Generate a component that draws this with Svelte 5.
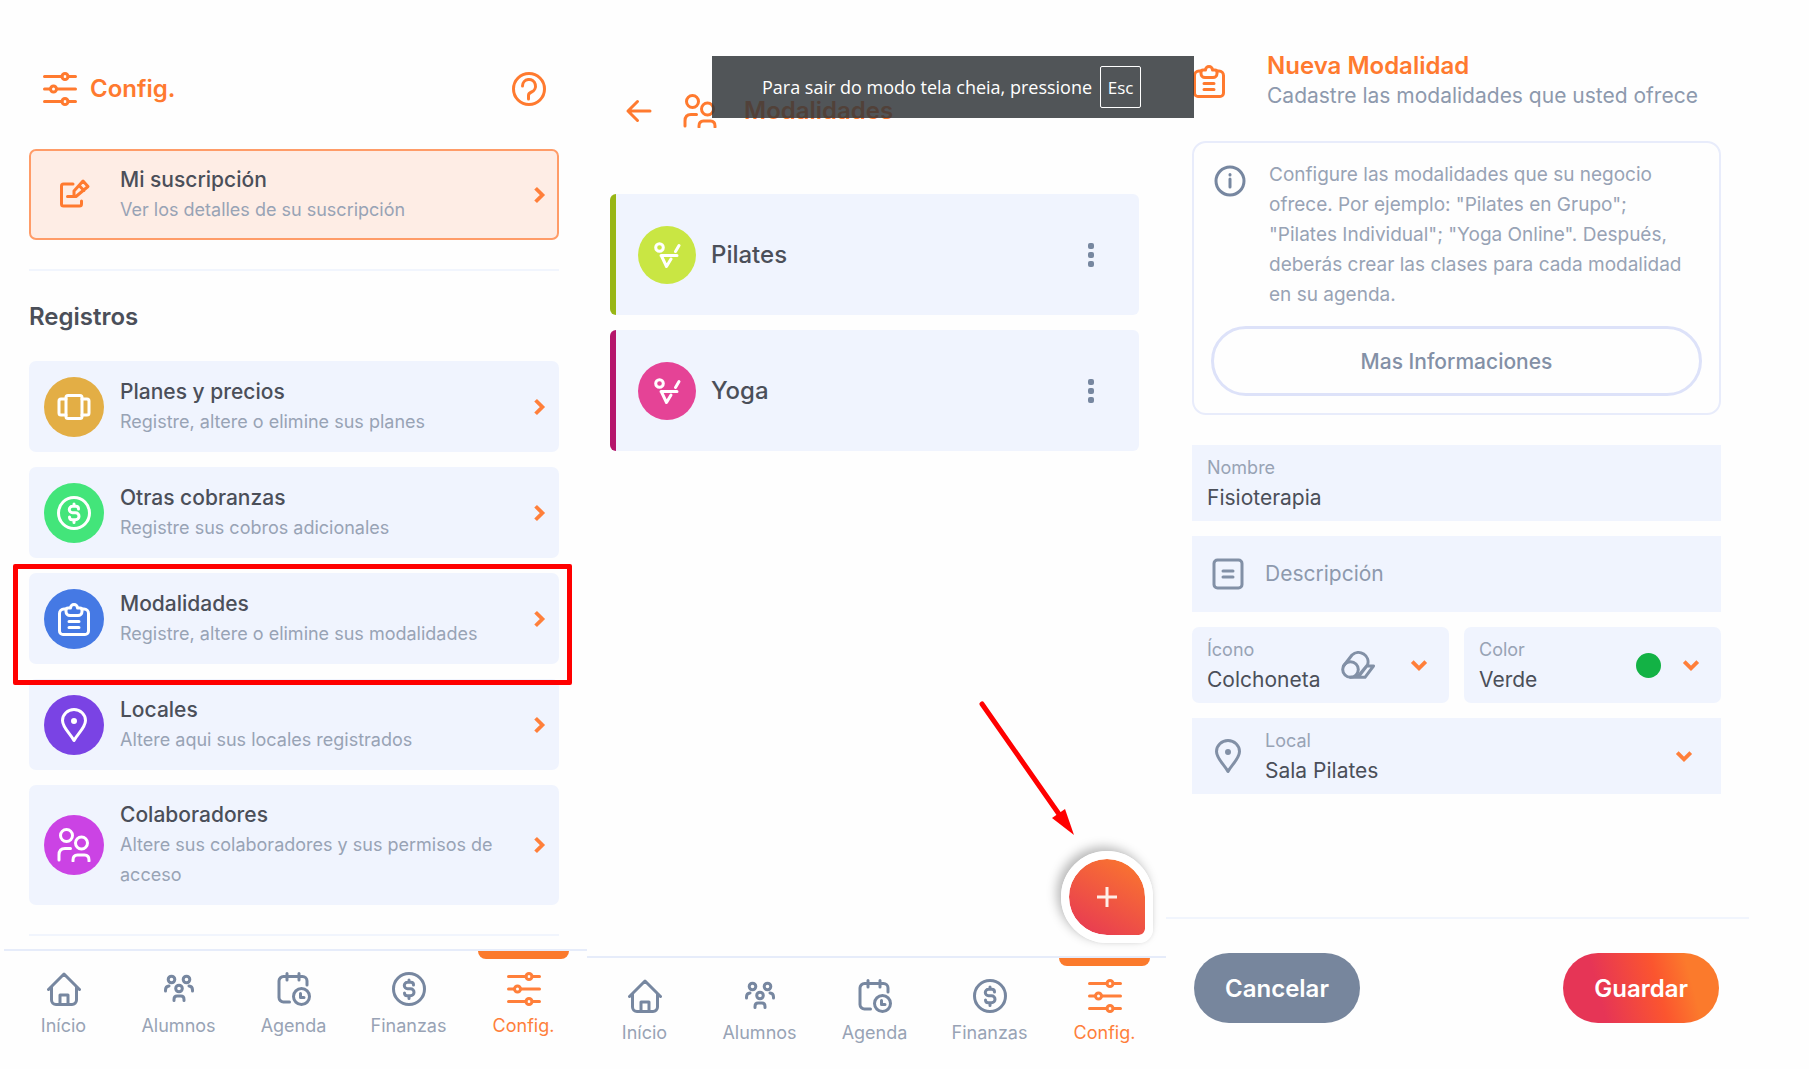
<script>
	const records = [
		{ icon: 'plans', color: '#e3ae45', title: 'Planes y precios', text: 'Registre, altere o elimine sus planes' },
		{ icon: 'money', color: '#43e57a', title: 'Otras cobranzas', text: 'Registre sus cobros adicionales' },
		{
			icon: 'clipboard',
			color: '#4579e4',
			title: 'Modalidades',
			text: 'Registre, altere o elimine sus modalidades',
			marked: true
		},
		{ icon: 'pin', color: '#7a43e4', title: 'Locales', text: 'Altere aqui sus locales registrados' },
		{
			icon: 'users',
			color: '#cb43e4',
			title: 'Colaboradores',
			text: 'Altere sus colaboradores y sus permisos de acceso'
		}
	];

	const classes = [
		{ name: 'Pilates', color: '#c9e643', edge: '#98b615' },
		{ name: 'Yoga', color: '#e54396', edge: '#b5156b' }
	];

	const tabs = [
		{ icon: 'home', label: 'Início' },
		{ icon: 'students', label: 'Alumnos' },
		{ icon: 'agenda', label: 'Agenda' },
		{ icon: 'money', label: 'Finanzas' },
		{ icon: 'sliders', label: 'Config.', active: true }
	];

	let name = $state('Fisioterapia');
	let description = $state('');
	let iconName = $state('Colchoneta');
	let color = $state('Verde');
	let place = $state('Sala Pilates');
</script>

{#snippet icon(kind)}
	<svg class="icon" viewBox="0 0 34 34" aria-hidden="true">
		{#if kind === 'sliders'}
			<path d="M1.500 4.500h17.500M25 4.500h7.500M1.500 17h6M13.500 17h19M1.500 29.500h17.500M25 29.500h7.500" />
			<circle cx="22" cy="4.500" r="3" />
			<circle cx="10.500" cy="17" r="3" />
			<circle cx="22" cy="29.500" r="3" />
		{:else if kind === 'help'}
			<circle cx="17" cy="17" r="15.500" />
			<path d="M10.500 14a6.500 6.500 0 1 1 9 6c-2 .8-3 1.500-3 3.500v3.500" />
		{:else if kind === 'edit'}
			<path d="M16 6H6.500a2 2 0 0 0-2 2v18a2 2 0 0 0 2 2h16a2 2 0 0 0 2-2v-3" />
			<path d="M10.500 18.500H19L31 8.500l-5-5.500-9 10v5.500M22 7.500l5 5" />
		{:else if kind === 'plans'}
			<rect x="9" y="5.500" width="16" height="23" rx="2" />
			<path d="M9 9H4a2 2 0 0 0-2 2v12a2 2 0 0 0 2 2h5M25 9h5a2 2 0 0 1 2 2v12a2 2 0 0 1-2 2h-5" />
		{:else if kind === 'money'}
			<circle cx="17" cy="17" r="15.500" />
			<path d="M21.500 13c0-1.700-1.200-2.700-2.700-2.700h-3.300a3.200 3.200 0 0 0 0 6.400h3a3.500 3.500 0 0 1 0 7h-3.200c-1.700 0-2.800-1-2.800-2.700M17 8v2M17 24v2.500" />
		{:else if kind === 'clipboard'}
			<path d="M9 7H7a4.500 4.500 0 0 0-4.500 4.500V29A3.500 3.500 0 0 0 6 32.500h22a3.500 3.500 0 0 0 3.500-3.500V11.500A4.500 4.500 0 0 0 27 7h-2" />
			<path d="M9 8v1.500a4 4 0 0 0 4 4h8a4 4 0 0 0 4-4V8a2 2 0 0 0-2-2h-2.500a3.500 3.500 0 0 0-7 0H11a2 2 0 0 0-2 2zM12 19.500h10M12 25.500h10" />
		{:else if kind === 'pin'}
			<path d="M17 32.500C13.500 26 5.500 19.500 5.500 12.500a11.500 11 0 0 1 23 0c0 7-8 13.500-11.500 20z" />
			<circle class="solid" cx="17" cy="13" r="1.500" />
		{:else if kind === 'users'}
			<circle cx="9.500" cy="7.500" r="6" />
			<circle cx="24.500" cy="15" r="6" />
			<path d="M2 32v-5c0-4 2-6.500 6-6.500h5.500M16 33v-1c0-3.500 2-5 4.500-5h7c2.500 0 4.500 1.500 4.500 5v1" />
		{:else if kind === 'home'}
			<path d="M1.500 17.500L17 2l15.500 15.500M4.500 15v13a4.500 4.500 0 0 0 4.500 4.500h16a4.500 4.500 0 0 0 4.500-4.500V15M13 32v-9h8v9" />
		{:else if kind === 'students'}
			<circle cx="9.500" cy="7.500" r="3.300" />
			<circle cx="24.500" cy="7.500" r="3.300" />
			<circle cx="17" cy="16.500" r="3.300" />
			<path d="M3.500 19v-1c0-2.500 1.500-3.800 3.500-4M30.500 19v-1c0-2.500-1.500-3.800-3.500-4M12 28.500v-1c0-2 1-3.500 3-3.500h4c2 0 3 1.500 3 3.500v1" />
		{:else if kind === 'agenda'}
			<path d="M12.500 30H6.500A4.500 4.500 0 0 1 2 25.500V9a4.500 4.500 0 0 1 4.500-4.500h19A4.500 4.500 0 0 1 30 9v4M10 1.500V8M22 1.500V8" />
			<circle cx="24.500" cy="24.500" r="8" />
			<path d="M23.500 21.500v4h3.500" />
		{:else if kind === 'info'}
			<circle cx="17" cy="17" r="14" />
			<path d="M17 15v8M17 10.500v.5" />
		{:else if kind === 'doc'}
			<rect x="3" y="3" width="28" height="28" rx="3.500" />
			<path d="M12 14h10M12 20h10" />
		{:else if kind === 'mat'}
			<circle cx="9.500" cy="21.500" r="7.800" />
			<path d="M2.500 18L11 7a9.500 9.500 0 0 1 15.500 10L18 28M9.500 29.300H24L32.500 18h-6M16.500 29l9.500-11.500" />
		{:else if kind === 'pose'}
			<circle cx="9.500" cy="9.500" r="3.800" />
			<path d="M25.500 13.500l3.500-6M11 17.500h16M11.500 18l5 10.500 4.500-7.500" />
		{:else if kind === 'back'}
			<path d="M28 17H6M15.500 7.500L6 17l9.500 9.500" />
		{/if}
	</svg>
{/snippet}

{#snippet chevron(direction)}
	<svg class="chevron {direction}" viewBox="0 0 16 16" aria-hidden="true">
		<path d="M5 2l6 6-6 6" />
	</svg>
{/snippet}

{#snippet tabbar()}
	<nav class="tabbar">
		{#each tabs as tab}
			<a href="#{tab.icon}" class:active={tab.active}>
				{@render icon(tab.icon)}
				<span>{tab.label}</span>
			</a>
		{/each}
	</nav>
{/snippet}

<main class="screens">
	<section class="screen config">
		<div class="content">
			<header>
				{@render icon('sliders')}
				<h1>Config.</h1>
				<button aria-label="Ayuda">{@render icon('help')}</button>
			</header>

			<a class="row subscription" href="#suscripcion">
				<span class="badge">{@render icon('edit')}</span>
				<span class="text">
					<strong>Mi suscripción</strong>
					<small>Ver los detalles de su suscripción</small>
				</span>
				{@render chevron('right')}
			</a>

			<hr />
			<h2>Registros</h2>

			<div class="list">
				{#each records as record}
					<a class="row" class:marked={record.marked} href="#{record.icon}">
						<span class="badge" style="background: {record.color}">{@render icon(record.icon)}</span>
						<span class="text">
							<strong>{record.title}</strong>
							<small>{record.text}</small>
						</span>
						{@render chevron('right')}
					</a>
				{/each}
			</div>
			<hr />
		</div>
		{@render tabbar()}
	</section>

	<section class="screen classes">
		<div class="content">
			<header>
				<button aria-label="Volver">{@render icon('back')}</button>
				{@render icon('users')}
				<h1>Modalidades</h1>
			</header>

			<div class="list">
				{#each classes as item}
					<article style="border-color: {item.edge}">
						<span class="badge" style="background: {item.color}">{@render icon('pose')}</span>
						<h2>{item.name}</h2>
						<button class="dots" aria-label="Opciones de {item.name}">
							<i></i><i></i><i></i>
						</button>
					</article>
				{/each}
			</div>
		</div>

		<div class="add">
			<svg class="arrow" viewBox="0 0 100 140" aria-hidden="true">
				<path class="line" d="M3 4L82 117" />
				<path class="head" d="M73 118L86 109L95 135z" />
			</svg>
			<button aria-label="Agregar modalidad">
				<svg viewBox="0 0 24 24"><path d="M12 2v20M2 12h20" /></svg>
			</button>
		</div>
		{@render tabbar()}

		<div class="fullscreen-hint">
			<span>Para sair do modo tela cheia, pressione</span>
			<kbd>Esc</kbd>
		</div>
	</section>

	<section class="screen create">
		<form class="content" onsubmit={(e) => e.preventDefault()}>
			<header>
				{@render icon('clipboard')}
				<div>
					<h1>Nueva Modalidad</h1>
					<p>Cadastre las modalidades que usted ofrece</p>
				</div>
			</header>

			<div class="info">
				<div class="info-text">
					{@render icon('info')}
					<p>
						Configure las modalidades que su negocio ofrece. Por ejemplo: "Pilates en Grupo"; "Pilates
						Individual"; "Yoga Online". Después, deberás crear las clases para cada modalidad en su
						agenda.
					</p>
				</div>
				<button type="button">Mas Informaciones</button>
			</div>

			<div class="fields">
				<div class="field">
					<div class="control">
						<label for="name">Nombre</label>
						<input id="name" type="text" bind:value={name} />
					</div>
				</div>
				<div class="field with-icon">
					{@render icon('doc')}
					<div class="control">
						<input type="text" aria-label="Descripción" placeholder="Descripción" bind:value={description} />
					</div>
				</div>
				<div class="pair">
					<div class="field rounded">
						<div class="control">
							<label for="icon">Ícono</label>
							<select id="icon" bind:value={iconName}>
								<option>Colchoneta</option>
							</select>
						</div>
						<div class="mat">{@render icon('mat')}</div>
						{@render chevron('down')}
					</div>
					<div class="field rounded">
						<div class="control">
							<label for="color">Color</label>
							<select id="color" bind:value={color}>
								<option>Verde</option>
							</select>
						</div>
						<span class="swatch"></span>
						{@render chevron('down')}
					</div>
				</div>
				<div class="field with-icon place">
					{@render icon('pin')}
					<div class="control">
						<label for="place">Local</label>
						<select id="place" bind:value={place}>
							<option>Sala Pilates</option>
						</select>
					</div>
					{@render chevron('down')}
				</div>
			</div>
		</form>

		<footer>
			<button class="cancel">Cancelar</button>
			<button class="save">Guardar</button>
		</footer>
	</section>
</main>

<style>
	:global(body) {
		background: #fefefe;
	}

	.screens {
		display: grid;
		grid-template-columns: 583fr 579fr 583fr;
		min-height: 100vh;
		box-sizing: border-box;
		padding: 0 60px 0 4px;
		font-family: Inter, 'Liberation Sans', sans-serif;
		color: #4b4f59;
	}

	.screens * {
		box-sizing: border-box;
	}

	.screen {
		position: relative;
		display: flex;
		flex-direction: column;
		min-width: 0;
	}

	h1,
	h2,
	p {
		margin: 0;
	}

	h1 {
		font-size: 24px;
		line-height: 30px;
		font-weight: 600;
		color: #ff7a2f;
	}

	h2 {
		font-size: 24px;
		line-height: 30px;
		font-weight: 500;
	}

	a {
		color: inherit;
		text-decoration: none;
	}

	button,
	input,
	select {
		font: inherit;
		color: inherit;
		border: 0;
		padding: 0;
		background: none;
	}

	button {
		cursor: pointer;
	}

	.icon {
		flex: none;
		display: block;
		width: 34px;
		height: 34px;
		fill: none;
		stroke: currentColor;
		stroke-width: 3;
		stroke-linecap: round;
		stroke-linejoin: round;
	}

	.icon .solid {
		fill: currentColor;
	}

	.chevron {
		flex: none;
		width: 18px;
		height: 18px;
		fill: none;
		stroke: #ff7f3a;
		stroke-width: 3.4;
	}

	.down {
		transform: rotate(90deg);
	}

	header {
		display: flex;
		align-items: center;
		color: #ff7a2f;
	}

	.badge {
		flex: none;
		display: grid;
		place-items: center;
		width: 60px;
		height: 60px;
		border-radius: 50%;
		color: #fff;
	}

	.list {
		display: flex;
		flex-direction: column;
		gap: 15px;
	}

	hr {
		width: 100%;
		height: 2px;
		margin: 29px 0;
		border: 0;
		background: #f1f5fd;
	}

	/* settings */
	.config .content {
		padding: 72px 28px 0 25px;
	}

	.config header {
		gap: 13px;
		padding: 0 13px 0 14px;
		margin-bottom: 43px;
	}

	.config header button {
		margin-left: auto;
	}

	.config h2 {
		margin: 31px 0 29px;
		font-weight: 600;
	}

	.config hr:last-child {
		margin-bottom: 0;
	}

	.row {
		position: relative;
		display: flex;
		align-items: center;
		gap: 16px;
		min-height: 91px;
		padding: 15px 11px 15px 15px;
		border-radius: 7px;
		background: #f0f4fe;
	}

	.row .text {
		flex: 1;
		display: flex;
		flex-direction: column;
		line-height: 30px;
	}

	.row strong {
		font-size: 21px;
		font-weight: 500;
	}

	.row small {
		font-size: 18px;
		color: #98a3b5;
	}

	.subscription {
		padding: 13px 9px 13px 13px;
		border: 2px solid #ff9c68;
		background: #feede5;
	}

	.subscription .badge {
		color: #ff7a2f;
	}

	.marked::after {
		content: '';
		position: absolute;
		inset: -9px -13px -21px -16px;
		z-index: 1;
		border: 5px solid #f00;
		border-radius: 2px;
	}

	.tabbar {
		display: grid;
		grid-template-columns: repeat(5, 1fr);
		margin-top: auto;
		padding: 0 6px 31px 2px;
		border-top: 2px solid #e6ecfa;
	}

	.tabbar a {
		position: relative;
		display: flex;
		flex-direction: column;
		align-items: center;
		gap: 8px;
		padding-top: 21px;
		font-size: 18px;
		line-height: 24px;
		color: #98a3b5;
	}

	.tabbar .icon {
		color: #7787a0;
	}

	.tabbar .active,
	.tabbar .active .icon {
		color: #ff7f3a;
	}

	.tabbar .active::before {
		content: '';
		position: absolute;
		top: 0;
		left: 12px;
		right: 12px;
		height: 8px;
		border-radius: 0 0 8px 8px;
		background: #fb7a2c;
	}

	/* list of classes */
	.classes .content {
		padding: 94px 27px 0 23px;
	}

	.classes header {
		gap: 27px;
		padding-left: 12px;
		margin-bottom: 66px;
	}

	.classes .badge {
		width: 58px;
		height: 58px;
	}

	.classes .tabbar {
		margin-top: 0;
		padding: 0 4px 24px 0;
	}

	article {
		display: flex;
		align-items: center;
		gap: 15px;
		min-height: 121px;
		padding: 0 39px 0 22px;
		border-left: 6px solid;
		border-radius: 6px;
		background: #f0f4fe;
	}

	.dots {
		display: grid;
		gap: 3px;
		margin-left: auto;
		padding: 6px;
	}

	.dots i {
		width: 6px;
		height: 6px;
		border-radius: 2px;
		background: #7787a0;
	}

	.add {
		position: relative;
		align-self: flex-end;
		margin: auto 13px 13px 0;
	}

	.add button {
		display: grid;
		place-items: center;
		width: 92px;
		height: 92px;
		border: 8px solid #fff;
		border-radius: 46px 46px 14px 46px;
		background: linear-gradient(30deg, #e63556, #fb7a2c) padding-box;
		box-shadow: -4px -4px 11px rgba(0, 0, 0, 0.28), 1px 1px 3px rgba(0, 0, 0, 0.04);
	}

	.add button svg {
		width: 24px;
		height: 24px;
		stroke: #fdeee8;
		stroke-width: 3;
	}

	.arrow {
		position: absolute;
		left: -82px;
		top: -151px;
		width: 100px;
		height: 140px;
		z-index: 1;
	}

	.arrow .line {
		stroke: #f00;
		stroke-width: 5;
		stroke-linecap: round;
	}

	.arrow .head {
		fill: #f00;
	}

	.fullscreen-hint {
		position: absolute;
		top: 56px;
		left: 125px;
		z-index: 2;
		display: flex;
		align-items: center;
		gap: 8px;
		height: 62px;
		padding: 0 53px 0 50px;
		background: rgba(51, 55, 59, 0.85);
		color: #fff;
		font-family: 'Open Sans', 'Noto Sans', sans-serif;
		font-size: 18px;
		white-space: nowrap;
	}

	kbd {
		display: grid;
		place-items: center;
		width: 41px;
		height: 42px;
		border: 1px solid #fff;
		border-radius: 2px;
		font: inherit;
		font-size: 17px;
	}

	/* new class form */
	.create .content {
		padding: 51px 28px 0 26px;
	}

	.create header {
		gap: 41px;
		margin-bottom: 30px;
	}

	.create header p {
		font-size: 21px;
		line-height: 30px;
		color: #8d99ad;
	}

	.info {
		padding: 17px;
		margin-bottom: 30px;
		border: 2px solid #e8ecfb;
		border-radius: 14px;
	}

	.info-text {
		display: flex;
		gap: 22px;
		margin-bottom: 16px;
		padding: 0 8px 0 2px;
		font-size: 19px;
		line-height: 30px;
		color: #98a3b5;
	}

	.info-text .icon {
		margin-top: 4px;
		color: #7787a0;
	}

	.info button {
		width: 100%;
		height: 70px;
		border: 3px solid #dde2f9;
		border-radius: 35px;
		font-size: 21px;
		font-weight: 500;
		color: #8390a6;
	}

	.fields {
		display: flex;
		flex-direction: column;
		gap: 15px;
	}

	.pair {
		display: grid;
		grid-template-columns: 1fr 1fr;
		gap: 15px;
	}

	.field {
		display: flex;
		align-items: center;
		min-width: 0;
		min-height: 76px;
		padding: 0 15px;
		background: #f0f4fe;
	}

	.rounded {
		padding-right: 21px;
		border-radius: 7px;
	}

	.with-icon {
		gap: 20px;
		padding-left: 19px;
	}

	.place {
		padding-right: 28px;
	}

	.field > .icon,
	.mat {
		color: #8290a6;
	}

	.control {
		flex: 1;
		display: flex;
		flex-direction: column;
		min-width: 0;
	}

	label {
		font-size: 18px;
		line-height: 30px;
		color: #98a3b5;
	}

	input,
	select {
		width: 100%;
		height: 30px;
		appearance: none;
		outline: 0;
		font-size: 21px;
		line-height: 30px;
	}

	input::placeholder {
		color: #8d99ad;
		opacity: 1;
	}

	.mat {
		margin-right: 35px;
	}

	.swatch {
		width: 25px;
		height: 25px;
		margin-right: 21px;
		border-radius: 50%;
		background: #13b245;
	}

	footer {
		display: flex;
		justify-content: space-between;
		margin-top: auto;
		padding: 34px 30px 46px 28px;
		border-top: 2px solid #f1f5fd;
	}

	footer button {
		height: 70px;
		padding: 0 31px;
		border-radius: 35px;
		font-size: 24px;
		font-weight: 600;
		color: #fff;
	}

	.cancel {
		background: #77869d;
	}

	.save {
		background: linear-gradient(75deg, #e63556 25%, #fb552f 60%, #fb7a2c 80%);
	}
</style>
